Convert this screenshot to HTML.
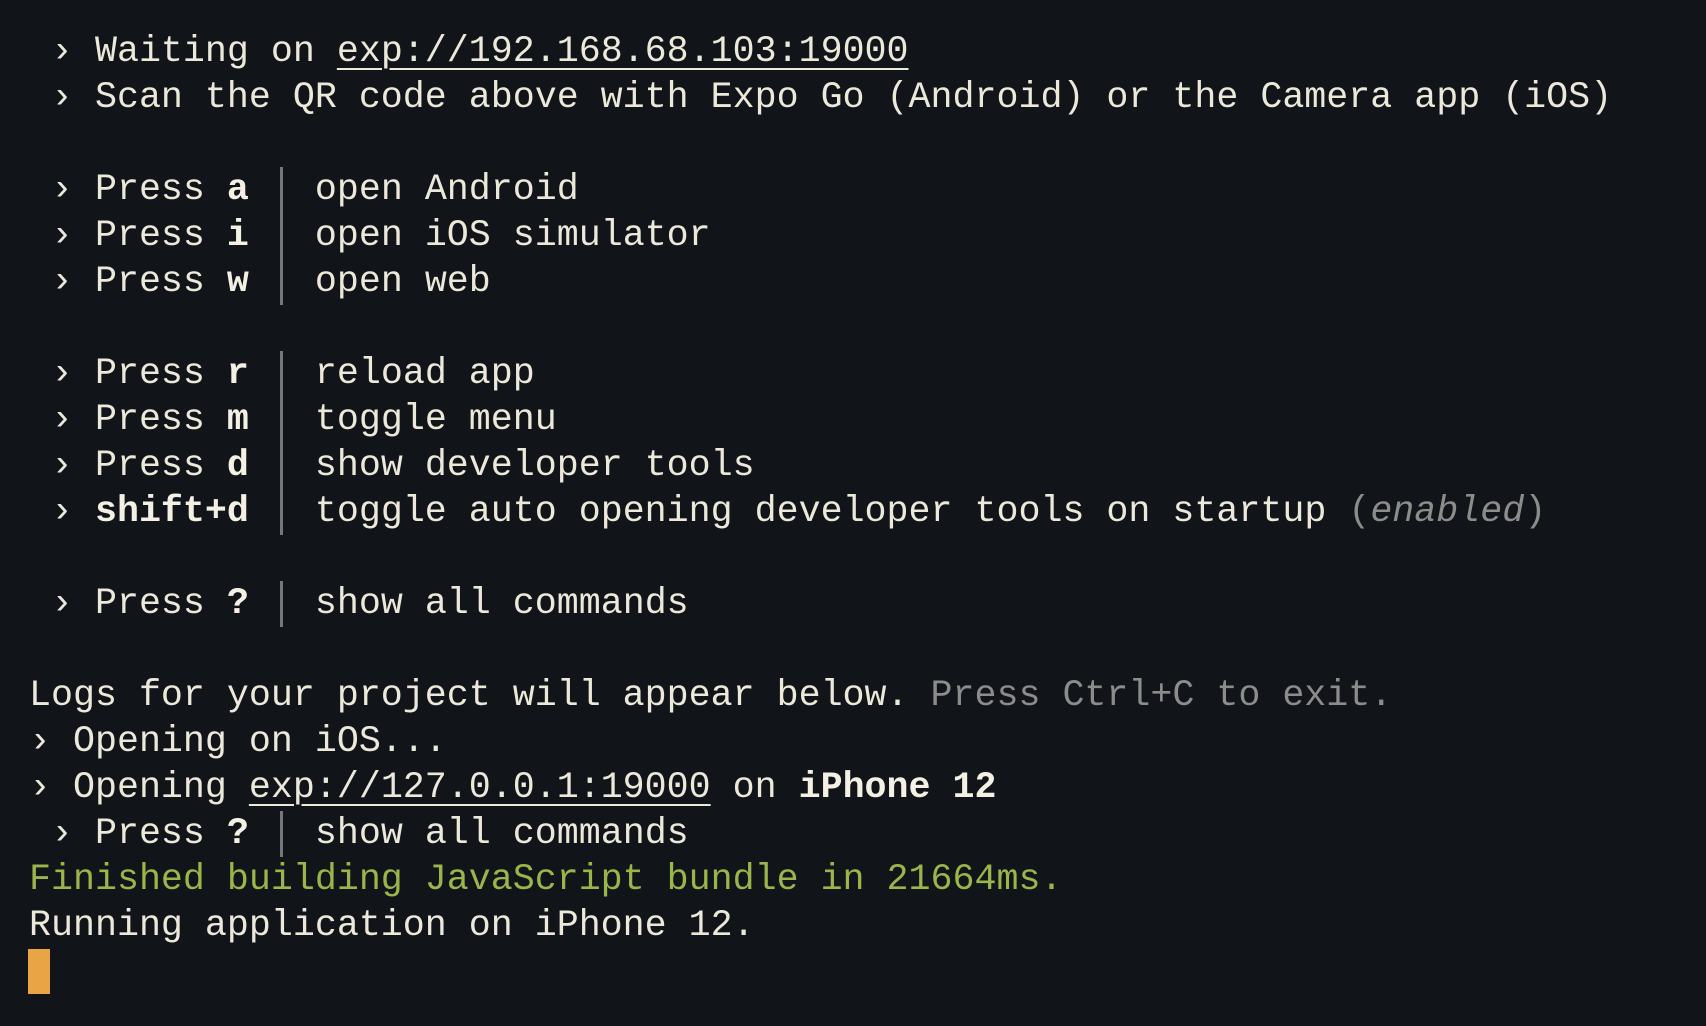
<!DOCTYPE html>
<html><head><meta charset="utf-8"><style>
html,body{margin:0;padding:0;background:#111419;width:1706px;height:1026px;overflow:hidden}
.t{position:absolute;left:29px;font-family:"Liberation Mono",monospace;font-size:36.65px;line-height:46px;height:46px;white-space:pre;color:#ece8da}
b{font-weight:bold;color:#f4f0e4}
.u{text-decoration:underline;text-underline-offset:7px;text-decoration-thickness:2px}
.g{color:#8c8c8a}
.gr{color:#9ab54a}
.bar{display:inline-block;width:21.99px;height:46px;vertical-align:top;background:linear-gradient(to right,transparent 9px,#77777a 9px,#77777a 12px,transparent 12px)}
.cur{position:absolute;left:28px;top:949px;width:22px;height:45px;background:#e8a445}
</style></head><body>
<div class="t" style="top:29px"> › Waiting on <span class="u">exp://192.168.68.103:19000</span></div>
<div class="t" style="top:75px"> › Scan the QR code above with Expo Go (Android) or the Camera app (iOS)</div>
<div class="t" style="top:167px"> › Press <b>a</b> <span class="bar"></span> open Android</div>
<div class="t" style="top:213px"> › Press <b>i</b> <span class="bar"></span> open iOS simulator</div>
<div class="t" style="top:259px"> › Press <b>w</b> <span class="bar"></span> open web</div>
<div class="t" style="top:351px"> › Press <b>r</b> <span class="bar"></span> reload app</div>
<div class="t" style="top:397px"> › Press <b>m</b> <span class="bar"></span> toggle menu</div>
<div class="t" style="top:443px"> › Press <b>d</b> <span class="bar"></span> show developer tools</div>
<div class="t" style="top:489px"> › <b>shift+d</b> <span class="bar"></span> toggle auto opening developer tools on startup <span class="g">(<i>enabled</i>)</span></div>
<div class="t" style="top:581px"> › Press <b>?</b> <span class="bar"></span> show all commands</div>
<div class="t" style="top:673px">Logs for your project will appear below. <span class="g">Press Ctrl+C to exit.</span></div>
<div class="t" style="top:719px">› Opening on iOS...</div>
<div class="t" style="top:765px">› Opening <span class="u">exp://127.0.0.1:19000</span> on <b>iPhone 12</b></div>
<div class="t" style="top:811px"> › Press <b>?</b> <span class="bar"></span> show all commands</div>
<div class="t gr" style="top:857px">Finished building JavaScript bundle in 21664ms.</div>
<div class="t" style="top:903px">Running application on iPhone 12.</div>
<div class="cur"></div>
</body></html>
